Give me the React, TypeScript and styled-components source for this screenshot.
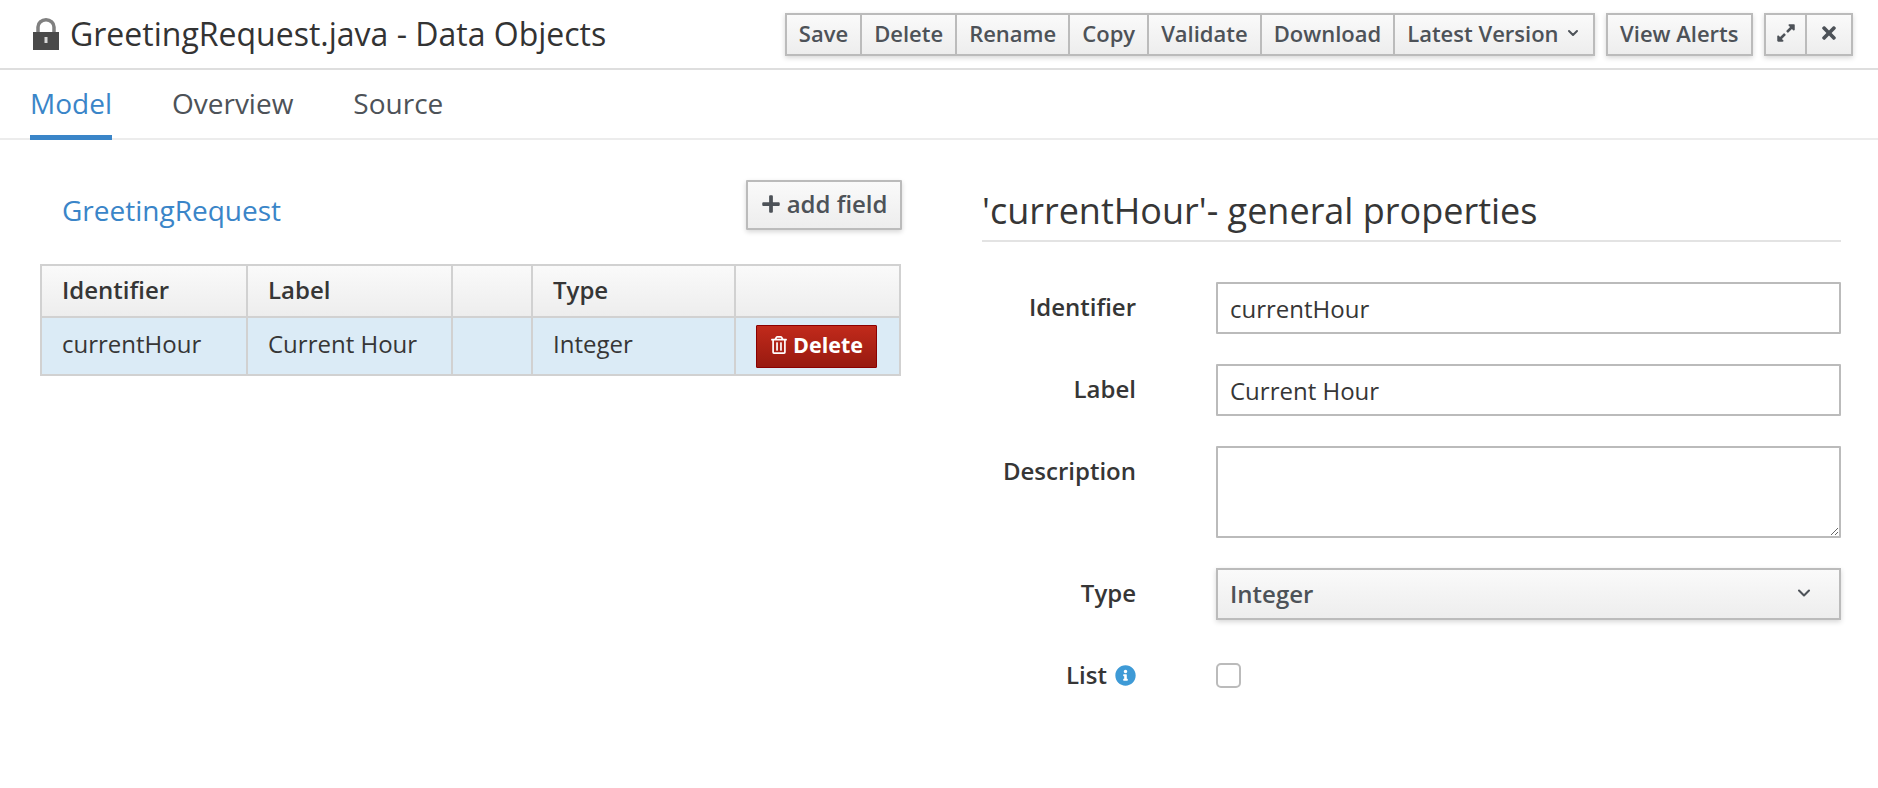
import React from 'react';
import styled, { createGlobalStyle } from 'styled-components';
import { FaExpandAlt, FaInfoCircle, FaPlus, FaRegTrashAlt, FaTimes } from 'react-icons/fa';
import { FiChevronDown } from 'react-icons/fi';

const GlobalStyle = createGlobalStyle`
    html, body {
        margin: 0;
        padding: 0;
        background: #ffffff;
        color: #363636;
        font-family: 'Open Sans', 'Liberation Sans', sans-serif;
    }
`;

const Page = styled.div`
    width: 1878px;
    height: 788px;
    overflow: hidden;
`;

const TitleBar = styled.header`
    height: 55px;
    padding: 13px 25px 0 33px;
    border-bottom: 2px solid #dedede;
    display: flex;
    justify-content: space-between;
    align-items: flex-start;
`;

const TitleGroup = styled.div`
    display: flex;
    align-items: center;
    height: 42px;
    gap: 11px;
`;

const Title = styled.h1`
    margin: 0;
    font-size: 32px;
    font-weight: 400;
    line-height: 40px;
    color: #333333;
`;

const Toolbar = styled.div`
    display: flex;
    gap: 11px;
`;

const ButtonGroup = styled.div`
    display: flex;
    box-shadow: 0 2px 5px rgba(0, 0, 0, 0.16);
`;

const ToolButton = styled.button<{ $pad?: number }>`
    height: 43px;
    box-sizing: border-box;
    padding: 0 ${(p) => p.$pad ?? 12}px 4px;
    margin: 0 0 0 -2px;
    border: 2px solid #bbbbbb;
    background: linear-gradient(#fafafa, #ededed);
    color: #4d5258;
    font-family: inherit;
    font-size: 22px;
    font-weight: 600;
    display: flex;
    align-items: center;
    gap: 6px;
    white-space: nowrap;

    &:first-child {
        margin-left: 0;
    }
`;

const Tabs = styled.nav`
    height: 68px;
    border-bottom: 2px solid #ececec;
    padding-left: 30px;
    display: flex;
    gap: 60px;
`;

const Tab = styled.div<{ $active?: boolean }>`
    height: ${(p) => (p.$active ? 65 : 70)}px;
    line-height: 66px;
    font-size: 28px;
    color: ${(p) => (p.$active ? '#3a85c8' : '#4d5258')};
    border-bottom: ${(p) => (p.$active ? '5px solid #3a85c8' : '0')};
`;

const Main = styled.main`
    display: flex;
    padding: 40px 37px 0 40px;
    gap: 80px;
`;

const LeftColumn = styled.section`
    width: 862px;
`;

const ObjectHead = styled.div`
    display: flex;
    justify-content: space-between;
    align-items: center;
    height: 50px;
    padding-left: 22px;
    margin-bottom: 34px;
`;

const ObjectName = styled.a`
    font-size: 28px;
    line-height: 60px;
    padding-top: 10px;
    color: #3a85c8;
`;

const AddField = styled(ToolButton)`
    height: 50px;
    padding: 0 12.5px 3px;
    font-size: 24px;
    gap: 6px;
    box-shadow: 0 2px 5px rgba(0, 0, 0, 0.16);
    border-radius: 1px;
`;

const Table = styled.table`
    width: 859px;
    table-layout: fixed;
    border-collapse: collapse;
    font-size: 24px;
    color: #363636;
`;

const HeadCell = styled.th`
    height: 46px;
    padding: 0 20px 4px;
    text-align: left;
    font-weight: 600;
    font-size: 24px;
    border: 2px solid #d1d1d1;
    background: linear-gradient(#fafafa, #ededed);
`;

const Cell = styled.td`
    height: 50px;
    padding: 0 20px 6px;
    border: 2px solid #d1d1d1;
    background: #dbebf6;
`;

const DangerButton = styled.button`
    width: 121px;
    height: 43px;
    margin-top: 6px;
    display: flex;
    align-items: center;
    justify-content: center;
    gap: 5px;
    padding: 0 0 3px;
    border: 1px solid #8b0000;
    border-radius: 1px;
    background: linear-gradient(#c12a1b, #981a10);
    color: #ffffff;
    font-family: inherit;
    font-size: 21.5px;
    font-weight: 700;
`;

const RightColumn = styled.section`
    flex: 1;
`;

const Heading = styled.h2`
    margin: 0 0 40px;
    height: 60px;
    line-height: 62px;
    border-bottom: 2px solid #e3e3e3;
    font-size: 36px;
    font-weight: 400;
    color: #363636;
`;

const FormRow = styled.div`
    display: grid;
    grid-template-columns: 154px 625px;
    column-gap: 80px;
    margin-bottom: 30px;
    align-items: start;
`;

const FieldLabel = styled.label`
    display: flex;
    justify-content: flex-end;
    align-items: center;
    gap: 8px;
    line-height: 50px;
    font-size: 24px;
    font-weight: 600;
    white-space: nowrap;
    color: #363636;
`;

const TextInput = styled.input`
    width: 100%;
    height: 52px;
    box-sizing: border-box;
    padding: 0 12px;
    border: 2px solid #bbbbbb;
    border-radius: 1px;
    font-family: inherit;
    font-size: 24px;
    color: #363636;
    outline: none;
`;

const TextArea = styled.textarea`
    display: block;
    width: 100%;
    height: 92px;
    box-sizing: border-box;
    padding: 8px 12px;
    border: 2px solid #bbbbbb;
    border-radius: 1px;
    outline: none;
`;

const SelectBox = styled.div`
    height: 52px;
    box-sizing: border-box;
    padding: 0 25px 2px 12px;
    display: flex;
    align-items: center;
    justify-content: space-between;
    border: 2px solid #bbbbbb;
    background: linear-gradient(#fafafa, #ededed);
    box-shadow: 0 2px 5px rgba(0, 0, 0, 0.16);
    font-size: 24px;
    font-weight: 600;
    color: #4d5258;
`;

const CheckBox = styled.input.attrs({ type: 'checkbox' })`
    appearance: none;
    display: block;
    width: 25px;
    height: 25px;
    margin: 13px 0 0;
    border: 2px solid #bbbbbb;
    border-radius: 5px;
    background: #ffffff;
`;

const InfoIcon = styled(FaInfoCircle)`
    color: #3e9ad6;
    font-size: 21px;
`;

const LockIcon = () => (
    <svg width="26" height="32" viewBox="0 0 26 32">
        <path d="M5 14V9a8 7.2 0 0 1 16 0V14" fill="none" stroke="#808080" strokeWidth="3.5" />
        <rect x="0" y="14" width="26" height="18" fill="#4a4a4a" />
        <rect x="11.5" y="19" width="3" height="6" fill="#d8d8d8" />
    </svg>
);

const actions = ['Save', 'Delete', 'Rename', 'Copy', 'Validate', 'Download'];

export default function App() {
    return (
        <Page>
            <GlobalStyle />
            <TitleBar>
                <TitleGroup>
                    <LockIcon />
                    <Title>GreetingRequest.java - Data Objects</Title>
                </TitleGroup>
                <Toolbar>
                    <ButtonGroup>
                        {actions.map((a) => (
                            <ToolButton key={a}>{a}</ToolButton>
                        ))}
                        <ToolButton>
                            Latest Version
                            <FiChevronDown size={16} strokeWidth={3} />
                        </ToolButton>
                    </ButtonGroup>
                    <ButtonGroup>
                        <ToolButton $pad={12.5}>View Alerts</ToolButton>
                    </ButtonGroup>
                    <ButtonGroup>
                        <ToolButton $pad={9.5}>
                            <FaExpandAlt size={20} />
                        </ToolButton>
                        <ToolButton $pad={12}>
                            <FaTimes size={20} />
                        </ToolButton>
                    </ButtonGroup>
                </Toolbar>
            </TitleBar>
            <Tabs>
                <Tab $active>Model</Tab>
                <Tab>Overview</Tab>
                <Tab>Source</Tab>
            </Tabs>
            <Main>
                <LeftColumn>
                    <ObjectHead>
                        <ObjectName>GreetingRequest</ObjectName>
                        <AddField>
                            <FaPlus size={20} />
                            add field
                        </AddField>
                    </ObjectHead>
                    <Table>
                        <colgroup>
                            <col style={{ width: 206 }} />
                            <col style={{ width: 205 }} />
                            <col style={{ width: 80 }} />
                            <col style={{ width: 203 }} />
                            <col style={{ width: 165 }} />
                        </colgroup>
                        <thead>
                            <tr>
                                <HeadCell>Identifier</HeadCell>
                                <HeadCell>Label</HeadCell>
                                <HeadCell />
                                <HeadCell>Type</HeadCell>
                                <HeadCell />
                            </tr>
                        </thead>
                        <tbody>
                            <tr>
                                <Cell>currentHour</Cell>
                                <Cell>Current Hour</Cell>
                                <Cell />
                                <Cell>Integer</Cell>
                                <Cell>
                                    <DangerButton>
                                        <FaRegTrashAlt size={18} />
                                        Delete
                                    </DangerButton>
                                </Cell>
                            </tr>
                        </tbody>
                    </Table>
                </LeftColumn>
                <RightColumn>
                    <Heading>'currentHour'- general properties</Heading>
                    <FormRow>
                        <FieldLabel>Identifier</FieldLabel>
                        <TextInput readOnly value="currentHour" />
                    </FormRow>
                    <FormRow>
                        <FieldLabel>Label</FieldLabel>
                        <TextInput readOnly value="Current Hour" />
                    </FormRow>
                    <FormRow>
                        <FieldLabel>Description</FieldLabel>
                        <TextArea readOnly />
                    </FormRow>
                    <FormRow>
                        <FieldLabel>Type</FieldLabel>
                        <SelectBox>
                            Integer
                            <FiChevronDown size={20} strokeWidth={2.5} />
                        </SelectBox>
                    </FormRow>
                    <FormRow>
                        <FieldLabel>
                            List
                            <InfoIcon />
                        </FieldLabel>
                        <CheckBox />
                    </FormRow>
                </RightColumn>
            </Main>
        </Page>
    );
}
